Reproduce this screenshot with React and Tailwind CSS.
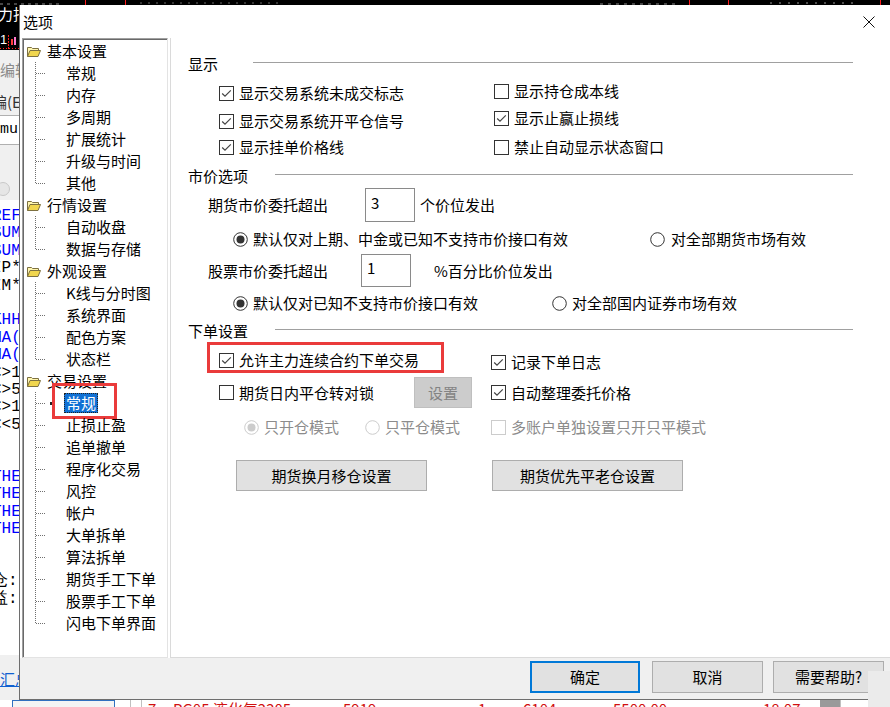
import React from 'react';

const tree = [
  { title: '基本设置', items: ['常规', '内存', '多周期', '扩展统计', '升级与时间', '其他'] },
  { title: '行情设置', items: ['自动收盘', '数据与存储'] },
  { title: '外观设置', items: ['K线与分时图', '系统界面', '配色方案', '状态栏'] },
  {
    title: '交易设置',
    items: ['常规', '止损止盈', '追单撤单', '程序化交易', '风控', '帐户', '大单拆单', '算法拆单', '期货手工下单', '股票手工下单', '闪电下单界面'],
    selected: 0,
  },
];

const codeLines = [
  ['REF', 'b'], ['SUM', 'b'], ['SUM', 'b'], ['IP*', 'k'], ['IM*', 'k'], ['', 'k'],
  ['KHH', 'b'], ['MA(', 'b'], ['MA(', 'b'], ['<>1', 'k'], ['<>5', 'k'], ['<>1', 'k'], ['<<5', 'k'],
  ['', 'k'], ['', 'k'], ['THE', 'b'], ['THE', 'b'], ['THE', 'b'], ['THE', 'b'], ['', 'k'], ['', 'k'],
  ['仓:', 'k'], ['益:', 'k'],
];

function Folder() {
  return (
    <svg width="14" height="11" viewBox="0 0 14 11" className="shrink-0">
      <path d="M0.5 10.5 V1.5 H4.5 L5.5 2.5 H11.5 V4.5" fill="#fff6b0" stroke="#7d7040" />
      <path d="M0.5 10.5 L3 4.5 H13.5 L11 10.5 Z" fill="#f1d64e" stroke="#7d7040" />
    </svg>
  );
}

function Connector({ last, width = 43, cursor }) {
  return (
    <svg width={width} height="22" viewBox={`0 0 ${width} 22`} className="shrink-0">
      <line x1="12.5" y1="0" x2="12.5" y2={last ? 11 : 22} stroke="#6f6f6f" strokeDasharray="1 1" />
      <line x1="13" y1="11.5" x2="23" y2="11.5" stroke="#6f6f6f" strokeDasharray="1 1" />
      {cursor && <rect x="27" y="10" width="5" height="3" fill="#222" />}
    </svg>
  );
}

function TreeGroup({ group }) {
  return (
    <div className="flex flex-col">
      <div className="flex h-[22px] items-center pl-[4px]">
        <Folder />
        <span className="ml-[6px] leading-[22px]">{group.title}</span>
      </div>
      {group.items.map((item, i) => {
        const sel = group.selected === i;
        const last = i === group.items.length - 1;
        return (
          <div key={i} className="relative flex h-[22px] items-center">
            <Connector last={last} width={sel ? 41 : 43} cursor={sel} />
            {sel ? (
              <span className="h-[20px] border border-dotted border-[#222] bg-[#1070d4] px-[1px] leading-[18px] text-white">
                {item}
              </span>
            ) : (
              <span className="leading-[22px]">{item}</span>
            )}
            {sel && (
              <div className="absolute left-[29px] top-[-9px] h-[36px] w-[65px] border-[3px] border-[#ea3b3b]" />
            )}
          </div>
        );
      })}
    </div>
  );
}

function Check({ checked, disabled }) {
  return (
    <span
      className={`flex h-[15px] w-[15px] shrink-0 items-center justify-center border bg-white ${
        disabled ? 'border-[#cccccc]' : 'border-[#333333]'
      }`}
    >
      {checked && (
        <svg width="13" height="13" viewBox="0 0 13 13">
          <path d="M2.2 6.5 L5 9.2 L10.8 3.4" fill="none" stroke="#444" strokeWidth="1.2" />
        </svg>
      )}
    </span>
  );
}

function Radio({ checked, disabled }) {
  const c = disabled ? '#cccccc' : '#333333';
  return (
    <svg width="15" height="15" viewBox="0 0 15 15" className="shrink-0">
      <circle cx="7.5" cy="7.5" r="6.8" fill="white" stroke={c} strokeWidth="1" />
      {checked && <circle cx="7.5" cy="7.5" r="4" fill={c} />}
    </svg>
  );
}

function CheckRow({ label, checked, disabled, className = '', gap = 'ml-[5px]' }) {
  return (
    <div className={`flex h-[20px] items-center ${className}`}>
      <Check checked={checked} disabled={disabled} />
      <span className={`${gap} leading-[20px] ${disabled ? 'text-[#8c8c8c]' : ''}`}>{label}</span>
    </div>
  );
}

function RadioRow({ label, checked, disabled, className = '', gap = 'ml-[5px]' }) {
  return (
    <div className={`flex h-[20px] items-center ${className}`}>
      <Radio checked={checked} disabled={disabled} />
      <span className={`${gap} leading-[20px] ${disabled ? 'text-[#8c8c8c]' : ''}`}>{label}</span>
    </div>
  );
}

function SectionHead({ label, lineGap, className = '' }) {
  return (
    <div className={`flex w-[665px] items-start ${className}`}>
      <span className="leading-[20px]">{label}</span>
      <div className={`mt-[8px] h-px flex-1 bg-[#a0a0a0] ${lineGap}`} />
    </div>
  );
}

function LeftStrip() {
  return (
    <div className="flex w-[19px] shrink-0 flex-col overflow-hidden">
      <div className="flex h-[45px] flex-col overflow-hidden bg-black">
        <span className="-ml-[2px] whitespace-nowrap text-[15px] leading-[18px] text-white">力指</span>
        <svg width="19" height="27" viewBox="0 0 19 27">
          <text x="0" y="21" fill="#fff" fontSize="13" fontFamily="Liberation Sans">1</text>
          <line x1="8.5" y1="12" x2="8.5" y2="26" stroke="#ff2020" strokeDasharray="2 1" />
          <rect x="11" y="16" width="2" height="6" fill="#ff3a3a" />
          <rect x="14" y="14" width="2" height="8" fill="#ff7ad0" />
          <line x1="0" y1="25.5" x2="19" y2="25.5" stroke="#ff2020" strokeDasharray="1 2" />
        </svg>
      </div>
      <div className="flex h-[65px] flex-col bg-[#f0f0f0] pt-[10px]">
        <span className="whitespace-nowrap leading-[20px] text-[#8a8a8a]">编辑</span>
        <span className="-ml-[8px] mt-[12px] whitespace-nowrap leading-[20px] text-[#333]">编(E)</span>
      </div>
      <div className="flex h-[30px] items-center border-y border-[#b0b0b0] bg-white">
        <span className="whitespace-nowrap font-['Liberation_Mono',monospace] text-[15px]">mul</span>
      </div>
      <div className="flex h-[55px] flex-col justify-end bg-[#f0f0f0] pb-[4px]">
        <div className="-ml-[4px] h-[14px] w-[14px] rounded-full border border-[#c8c8c8] bg-[#e6e6e6]" />
      </div>
      <div className="flex h-[455px] flex-col bg-white pt-[8px]">
        {codeLines.map(([t, c], i) => (
          <span
            key={i}
            className={`-ml-[8px] h-[17.4px] whitespace-nowrap font-['Liberation_Mono',monospace] text-[16px] leading-[17.4px] ${
              c === 'b' ? 'text-[#0000ff]' : 'text-black'
            }`}
          >
            {t}
          </span>
        ))}
      </div>
      <div className="flex flex-1 flex-col bg-[#f0f0f0] pt-[16px]">
        <span className="whitespace-nowrap text-[15px] leading-[16px] text-[#1060d0] underline">汇总</span>
      </div>
    </div>
  );
}

function Dialog() {
  return (
    <div className="flex flex-1 flex-col border-b border-l border-[#6e6e6e] bg-[#f0f0f0]">
      <div className="flex h-[33px] items-center justify-between bg-white pl-[3px] pr-[15px]">
        <span className="leading-[20px]">选项</span>
        <svg width="12" height="12" viewBox="0 0 12 12">
          <path d="M0.5 0.5 L11.5 11.5 M11.5 0.5 L0.5 11.5" stroke="#111" strokeWidth="1" />
        </svg>
      </div>

      <div className="flex h-[620px] bg-white pl-[2px]">
        <div className="w-[146px] shrink-0 border border-b-[#e3e3e3] border-l-[#a0a0a0] border-r-[#e3e3e3] border-t-[#a0a0a0] bg-white pt-[1px] shadow-[inset_1px_1px_0_#696969]">
          {tree.map((g, i) => (
            <TreeGroup key={i} group={g} />
          ))}
        </div>

        <div className="ml-[2px] flex flex-1 flex-col border-b border-l border-[#dadada] bg-white pl-[17px] pt-[16px]">
          <SectionHead label="显示" lineGap="ml-[35px] mt-[7px]" />
          <div className="mt-[7px] flex">
            <div className="ml-[31px] mt-[2px] flex w-[275px] flex-col">
              <CheckRow label="显示交易系统未成交标志" checked />
              <CheckRow label="显示交易系统开平仓信号" checked className="mt-[8px]" />
              <CheckRow label="显示挂单价格线" checked className="mt-[6px]" />
            </div>
            <div className="flex flex-col">
              <CheckRow label="显示持仓成本线" />
              <CheckRow label="显示止赢止损线" checked className="mt-[7px]" />
              <CheckRow label="禁止自动显示状态窗口" className="mt-[9px]" />
            </div>
          </div>

          <SectionHead label="市价选项" lineGap="ml-[27px]" className="mt-[9px]" />
          <div className="mt-[2px] flex h-[34px] items-center">
            <span className="ml-[20px] w-[157px] leading-[20px]">期货市价委托超出</span>
            <div className="h-[34px] w-[50px] border border-[#8a8a8a] pl-[5px] pt-[4px] leading-[20px]">3</div>
            <span className="ml-[5px] leading-[20px]">个价位发出</span>
          </div>
          <div className="ml-[45px] mt-[7px] flex">
            <RadioRow label="默认仅对上期、中金或已知不支持市价接口有效" checked className="w-[417px]" />
            <RadioRow label="对全部期货市场有效" gap="ml-[6px]" />
          </div>
          <div className="mt-[5px] flex h-[33px] items-center">
            <span className="ml-[20px] w-[153px] leading-[20px]">股票市价委托超出</span>
            <div className="h-[33px] w-[50px] border border-[#8a8a8a] pl-[5px] pt-[3px] leading-[20px]">1</div>
            <span className="ml-[23px] leading-[20px]">%百分比价位发出</span>
          </div>
          <div className="ml-[45px] mt-[6px] flex">
            <RadioRow label="默认仅对已知不支持市价接口有效" checked className="w-[319px]" />
            <RadioRow label="对全部国内证券市场有效" />
          </div>

          <SectionHead label="下单设置" lineGap="ml-[27px]" className="mt-[8px]" />
          <div className="mt-[1px] flex items-start">
            <div className="w-[303px] shrink-0">
              <div className="ml-[19px] flex h-[31px] w-[237px] items-start border-[3px] border-[#ea3b3b] pl-[9px] pt-[5px]">
                <CheckRow label="允许主力连续合约下单交易" checked />
              </div>
            </div>
            <CheckRow label="记录下单日志" checked className="mt-[10px]" />
          </div>
          <div className="mt-[4px] flex items-center">
            <div className="flex w-[303px] shrink-0 items-center">
              <CheckRow label="期货日内平仓转对锁" className="ml-[31px] w-[195px]" />
              <div className="flex h-[31px] w-[58px] items-center justify-center border border-[#bfbfbf] bg-[#cccccc] leading-[20px] text-[#838383]">
                设置
              </div>
            </div>
            <CheckRow label="自动整理委托价格" checked />
          </div>
          <div className="mt-[9px] flex items-center">
            <div className="flex w-[303px] shrink-0 items-center">
              <RadioRow label="只开仓模式" checked disabled className="ml-[56px] w-[121px]" />
              <RadioRow label="只平仓模式" disabled />
            </div>
            <CheckRow label="多账户单独设置只开只平模式" disabled />
          </div>
          <div className="mt-[23px] flex">
            <div className="ml-[48px] flex h-[31px] w-[191px] items-center justify-center border border-[#adadad] bg-[#e1e1e1] leading-[20px]">
              期货换月移仓设置
            </div>
            <div className="ml-[65px] flex h-[31px] w-[191px] items-center justify-center border border-[#adadad] bg-[#e1e1e1] leading-[20px]">
              期货优先平老仓设置
            </div>
          </div>
        </div>
      </div>

      <div className="flex flex-1 items-start justify-end pr-[6px] pt-[3px]">
        <div className="flex h-[32px] w-[110px] items-center justify-center border-2 border-[#0078d7] bg-[#e1e1e1] leading-[20px]">
          确定
        </div>
        <div className="ml-[12px] flex h-[32px] w-[111px] items-center justify-center border border-[#adadad] bg-[#e1e1e1] leading-[20px]">
          取消
        </div>
        <div className="ml-[10px] flex h-[32px] w-[111px] items-center justify-center border border-[#adadad] bg-[#e1e1e1] leading-[20px]">
          需要帮助?
        </div>
      </div>
    </div>
  );
}

function BottomStrip() {
  const cells = [
    { w: 'w-[6px]', t: '' },
    { w: 'w-[25px]', t: '7' },
    { w: 'w-[170px]', t: 'PG05 液化气2205' },
    { w: 'w-[135px]', t: '5919' },
    { w: 'w-[45px]', t: '1' },
    { w: 'w-[90px]', t: '6104' },
    { w: 'w-[150px]', t: '5500.00' },
    { w: 'w-[57px]', t: '18.07' },
  ];
  return (
    <div className="flex h-[7px] overflow-hidden bg-white">
      <div className="ml-[12px] h-[7px] w-[103px] border-x border-t border-[#3070c0] bg-[#f4f4f4]" />
      <div className="ml-[15px] h-[7px] w-[12px] border-x border-[#c0c0c0]" />
      {cells.map((c, i) => (
        <div key={i} className={`${c.w} shrink-0 whitespace-nowrap pt-[1px] text-[15px] leading-[15px] text-[#d01010]`}>
          {c.t}
        </div>
      ))}
      <div className="h-[7px] w-[20px] bg-[#9a9a9a]" />
      <div className="h-[7px] flex-1 border-l border-[#c0c0c0]" />
    </div>
  );
}

export default function App() {
  return (
    <div className="relative flex h-[707px] w-[890px] flex-col overflow-hidden bg-black font-['Noto_Sans_CJK_SC',sans-serif] text-[15px] text-black">
      <svg width="890" height="5" viewBox="0 0 890 5" className="shrink-0">
        <line x1="0" y1="4" x2="60" y2="4" stroke="#8a8a8a" strokeDasharray="3 4" />
        <line x1="85.5" y1="0" x2="85.5" y2="5" stroke="#ff1a1a" />
        <line x1="125.5" y1="0" x2="125.5" y2="5" stroke="#ff1a1a" />
        <line x1="140" y1="3" x2="280" y2="3" stroke="#6a6a6a" strokeDasharray="2 6" />
        <line x1="600" y1="4" x2="680" y2="4" stroke="#8a8a8a" strokeDasharray="3 5" />
        <line x1="689.5" y1="0" x2="689.5" y2="5" stroke="#ff1a1a" />
        <line x1="728.5" y1="0" x2="728.5" y2="5" stroke="#ff1a1a" />
        <line x1="770" y1="3" x2="860" y2="3" stroke="#9a9a9a" strokeDasharray="2 7" />
        <line x1="880.5" y1="0" x2="880.5" y2="5" stroke="#ff1a1a" />
      </svg>
      <div className="flex h-[695px] shrink-0">
        <LeftStrip />
        <Dialog />
      </div>
      <BottomStrip />
      <div className="absolute left-[868px] top-[671px] h-[36px] w-[22px] bg-[#ebebeb]" />
    </div>
  );
}
